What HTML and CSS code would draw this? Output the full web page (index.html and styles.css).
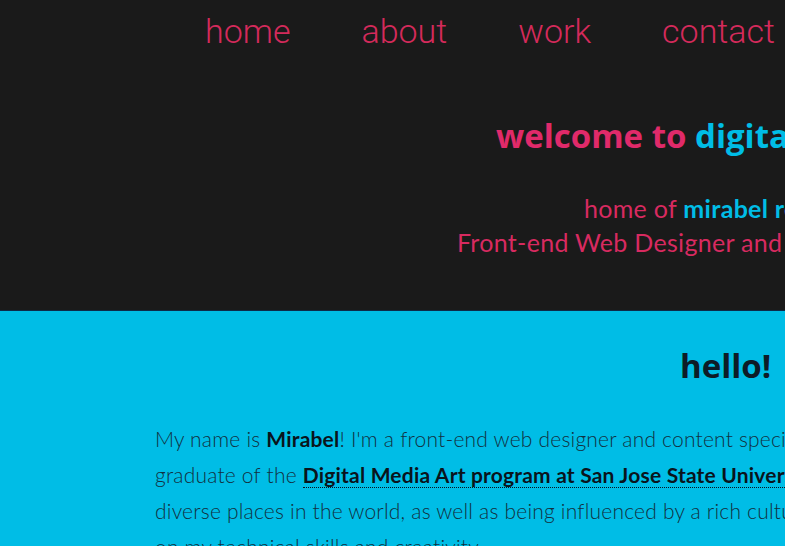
FILE: index.html
```html
<!DOCTYPE html>
<html>
<head>
<meta charset="utf-8">
<link rel="stylesheet" href="styles.css">
</head>
<body>
<header class="top">
  <nav class="nav">
    <a class="nav-link" href="#">home</a>
    <a class="nav-link" href="#">about</a>
    <a class="nav-link" href="#">work</a>
    <a class="nav-link" href="#">contact</a>
  </nav>
  <h1 class="welcome"><span class="pink">welcome to </span><span class="cyan">digital mirabel</span></h1>
  <p class="sub sub-1"><span>home of </span><b class="cyan">mirabel reyes</b></p>
  <p class="sub sub-2">Front-end Web Designer and Content Specialist</p>
</header>
<main class="about">
  <h2 class="hello">hello!</h2>
  <p class="intro">My name is <b>Mirabel</b>! I'm a front-end web designer and content specialist. I am a<br>graduate of the <a class="link" href="#">Digital Media Art program at San Jose State University</a>. Having lived in<br>diverse places in the world, as well as being influenced by a rich culture, has had an impact<br>on my technical skills and creativity.</p>
</main>
</body>
</html>
```

FILE: styles.css
```css
html, body {
  margin: 0;
  padding: 0;
  overflow: hidden;
  background: #00bde6;
}
body {
  width: 785px;
  height: 546px;
}
.top {
  background: #1a1a1a;
  height: 310px;
  border-bottom: 1px solid #0d2a4a;
  overflow: hidden;
  white-space: nowrap;
}
.nav {
  display: flex;
  gap: 71px;
  padding-left: 205px;
  height: 62px;
  align-items: flex-start;
}
.nav-link {
  font-family: Roboto, sans-serif;
  font-weight: 300;
  font-size: 34px;
  line-height: 62px;
  color: #d42a5b;
  text-decoration: none;
  flex: none;
}
.welcome {
  margin: 48px 0 0 0;
  padding-left: 496px;
  font-family: "Open Sans", sans-serif;
  font-weight: 700;
  font-size: 33px;
  line-height: 52px;
}
.pink { color: #e02a6a; }
.cyan { color: #00bde6; }
.sub {
  margin: 0;
  font-family: Lato, sans-serif;
  font-size: 25px;
  letter-spacing: 0.3px;
  line-height: 34px;
  color: #d82a60;
}
.sub-1 { padding-left: 584px; margin-top: 29px; }
.sub-2 { padding-left: 457px; }
.about {
  white-space: nowrap;
  overflow: hidden;
}
.hello {
  margin: 32px 0 0 0;
  padding-left: 680px;
  font-family: "Open Sans", sans-serif;
  font-weight: 700;
  font-size: 33px;
  line-height: 46px;
  color: #0d1b27;
}
.intro {
  margin: 32px 0 0 0;
  padding-left: 155px;
  font-family: Lato, sans-serif;
  font-weight: 300;
  font-size: 21px;
  letter-spacing: 0.2px;
  line-height: 36px;
  color: #12303f;
}
.intro b {
  font-weight: 700;
  color: #0a141c;
}
.link {
  font-weight: 700;
  color: #0a141c;
  text-decoration: none;
  border-bottom: 1px dotted #0a141c;
}
```
